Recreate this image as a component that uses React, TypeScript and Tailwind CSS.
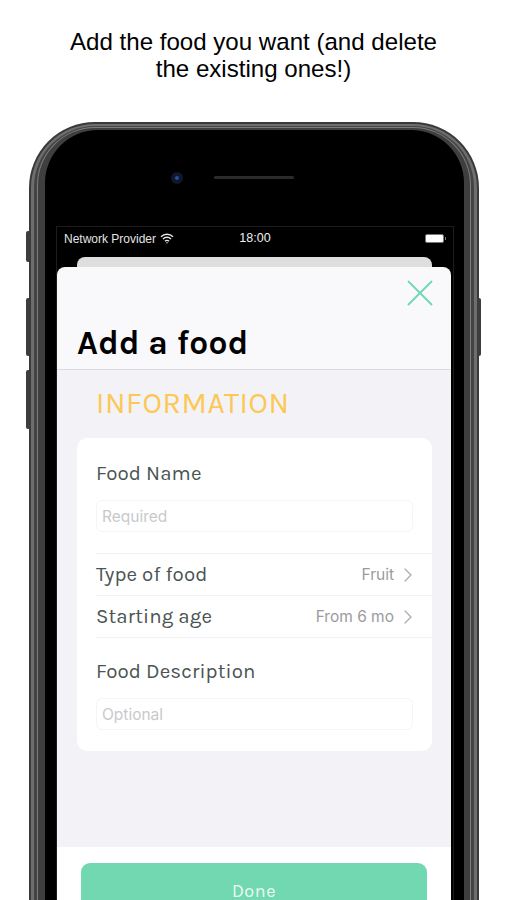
import { ChevronRight, X } from "lucide-react";

const bodyFont = "font-['Karla','Lato','Noto_Sans',sans-serif]";

function FieldBlock({ label, placeholder }: { label: string; placeholder: string }) {
  return (
    <div className="px-[19px]">
      <div className="h-[24px] text-[20.5px] leading-[24px] tracking-[0.1px] text-[#4a5453]">{label}</div>
      <div className="mt-[15px] h-[32px] rounded-[6px] border border-[#f5f5f6] pl-[5px] font-['Inter',sans-serif] text-[15.5px] leading-[31px] text-[#c9c9cb]">
        {placeholder}
      </div>
    </div>
  );
}

function PickerRow({ label, value }: { label: string; value: string }) {
  return (
    <div className="flex h-[42px] items-center justify-between border-t border-[#f3f3f5] pr-[12px]">
      <span className="text-[20.5px] tracking-[0.1px] text-[#4a5453]">{label}</span>
      <span className="flex items-center gap-[2px] font-['Inter',sans-serif] text-[15.5px] text-[#9b9b9d]">
        {value}
        <ChevronRight className="h-[24px] w-[24px] text-[#a9a9ab]" strokeWidth={1.2} />
      </span>
    </div>
  );
}

export default function App() {
  return (
    <div className="relative h-[900px] w-[507px] overflow-hidden bg-white">
      {/* Caption */}
      <div className="flex h-[122px] justify-center pt-[28px] text-center font-['Liberation_Sans',sans-serif] text-[24.1px] leading-[27px] text-black">
        <p>
          Add the food you want (and delete
          <br />
          the existing ones!)
        </p>
      </div>

      {/* Side buttons */}
      <div className="absolute left-[26px] top-[231px] h-[31px] w-[4px] rounded-l-[2px] bg-[#3d3d3d]" />
      <div className="absolute left-[26px] top-[298px] h-[58px] w-[4px] rounded-l-[2px] bg-[#3d3d3d]" />
      <div className="absolute left-[26px] top-[370px] h-[59px] w-[4px] rounded-l-[2px] bg-[#3d3d3d]" />
      <div className="absolute left-[477px] top-[298px] h-[58px] w-[4px] rounded-r-[2px] bg-[#3d3d3d]" />

      {/* Phone frame */}
      <div className="ml-[29px] h-[778px] w-[450px] rounded-t-[66px] bg-[#3a3a3a] px-[2px] pt-[2px]">
        <div className="h-full rounded-t-[64px] bg-[#6e6e6e] px-[3px] pt-[2px]">
          <div className="h-full rounded-t-[61px] bg-[#444444] px-[3px] pt-[1px]">
            <div className="h-full rounded-t-[58px] bg-[#7c7c7c] px-[1px] pt-[1px]">
              <div className="h-full rounded-t-[57px] bg-[#3f3f3f] pl-[7px] pr-[6px] pt-[2px]">
                <div className="flex h-full flex-col rounded-t-[53px] bg-black pl-[11px] pr-[10px]">
                  {/* Camera and speaker */}
                  <div className="flex h-[96px] shrink-0 items-start pl-[115px] pt-[42px]">
                    <div className="flex h-[12px] w-[12px] items-center justify-center rounded-full bg-[#10162c]">
                      <div className="h-[4px] w-[4px] rounded-full bg-[#2a4fa8]" />
                    </div>
                    <div className="ml-[31px] mt-[4px] h-[3px] w-[80px] rounded-full bg-[#2b2b2b]" />
                  </div>

                  {/* Screen */}
                  <div className="flex flex-1 flex-col border-x border-t border-[#1c1c1c]">
                    <div className="flex h-[23px] shrink-0 items-center justify-between pl-[7px] pr-[7px] font-['Liberation_Sans',sans-serif] text-[12px] text-[#e4e4e4]">
                      <span className="flex w-[120px] items-center gap-[4px]">
                        Network Provider
                        <svg width="14" height="11" viewBox="0 0 14 11" fill="none" stroke="#e8e8e8" strokeWidth="1.4">
                          <path d="M1 3.8a8.5 8.5 0 0 1 12 0" />
                          <path d="M3 6a5.6 5.6 0 0 1 8 0" />
                          <path d="M5 8.2a2.8 2.8 0 0 1 4 0" />
                          <circle cx="7" cy="9.8" r="0.7" fill="#e8e8e8" stroke="none" />
                        </svg>
                      </span>
                      <span className="text-[12.5px] text-[#efefef]">18:00</span>
                      <span className="flex w-[120px] items-center justify-end gap-[1px]">
                        <span className="h-[9px] w-[19px] rounded-[2px] border border-[#777777] bg-white" />
                        <span className="h-[3px] w-[1px] bg-[#777777]" />
                      </span>
                    </div>

                    {/* Card stacked behind the sheet */}
                    <div className="ml-[20px] mr-[21px] mt-[7px] h-[10px] shrink-0 rounded-t-[8px] bg-[#dedede]" />

                    {/* Sheet */}
                    <div className={`mr-[2px] flex flex-1 flex-col rounded-t-[8px] bg-[#f9f9fc] ${bodyFont}`}>
                      <div className="flex h-[29px] shrink-0 justify-end pr-[8px] pt-[3px]">
                        <X className="h-[46px] w-[46px] shrink-0 text-[#72d8b2]" strokeWidth={1} />
                      </div>
                      <div className="flex h-[74px] shrink-0 items-start border-b border-[#dcdce0] pl-[20px] pt-[28px] text-[33.5px] font-bold leading-[38px] tracking-[0.2px] text-black">
                        Add a food
                      </div>

                      <div className="flex flex-1 flex-col bg-[#f2f2f7]">
                        <div className="flex h-[68px] shrink-0 items-start pl-[39px] pt-[15px] text-[30px] leading-[36px] tracking-[0.6px] text-[#fcc853]">
                          INFORMATION
                        </div>
                        <div className="ml-[20px] mr-[19px] h-[313px] shrink-0 rounded-[10px] bg-white pt-[23px]">
                          <FieldBlock label="Food Name" placeholder="Required" />
                          <div className="ml-[19px] mt-[21px]">
                            <PickerRow label="Type of food" value="Fruit" />
                            <PickerRow label="Starting age" value="From 6 mo" />
                          </div>
                          <div className="ml-[19px] border-t border-[#f3f3f5]" />
                          <div className="pt-[21px]">
                            <FieldBlock label="Food Description" placeholder="Optional" />
                          </div>
                        </div>
                        <div className="h-[96px] shrink-0" />
                        <div className="flex-1 bg-white px-[24px] pt-[16px]">
                          <div className="flex h-[70px] justify-center rounded-[9px] bg-[#72d8b2] pt-[20px] text-[18px] leading-[16px] tracking-[0.6px] text-[#eafaf4]">
                            Done
                          </div>
                        </div>
                      </div>
                    </div>
                  </div>
                </div>
              </div>
            </div>
          </div>
        </div>
      </div>
    </div>
  );
}
